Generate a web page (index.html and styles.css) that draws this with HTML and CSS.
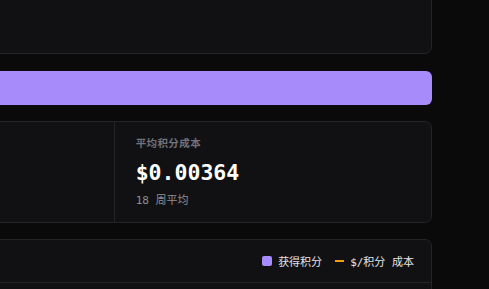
FILE: index.html
```html
<!DOCTYPE html>
<html>
  <head>
    <title>积分统计</title>
    <meta charset="utf-8">
    <link rel="stylesheet" href="styles.css">
  </head>
  <body>
    <main>
      <section class="card card-top"></section>

      <div class="bar"></div>

      <section class="card stats">
        <div class="stat"></div>
        <div class="stat"></div>
        <div class="stat">
          <div class="stat-label">平均积分成本</div>
          <div class="stat-value">$0.00364</div>
          <div class="stat-sub">18 周平均</div>
        </div>
      </section>

      <section class="card chart">
        <div class="chart-head">
          <span class="legend"><span class="swatch"></span>获得积分</span>
          <span class="legend"><span class="dash"></span>$/积分 成本</span>
        </div>
        <div class="chart-body"></div>
      </section>
    </main>
  </body>
</html>
```

FILE: styles.css
```css
:root {
  --color-background: #0a0a0a;
  --color-card: #111113;
  --color-border: #242427;
  --color-text: #f4f4f5;
  --color-muted: #71717a;
  --color-sub: #8e8e96;
  --color-purple: #a78bfa;
  --color-orange: #f59e0b;
}
html, body {
  margin: 0;
  height: 100%;
  overflow: hidden;
  background-color: var(--color-background);
  color: var(--color-text);
  font-family: "DejaVu Sans Mono", "Noto Sans CJK SC", monospace;
}
main {
  width: 954px;
  margin: 0 0 0 -522px;
  display: flex;
  flex-direction: column;
}
.card {
  background-color: var(--color-card);
  border: 1px solid var(--color-border);
  border-radius: 7px;
  box-sizing: border-box;
}
.card-top {
  height: 120px;
  margin-top: -66px;
}
.bar {
  height: 34px;
  margin-top: 17px;
  border-radius: 6px;
  background-color: var(--color-purple);
}
.stats {
  margin-top: 16px;
  height: 102px;
  display: grid;
  grid-template-columns: repeat(3, 1fr);
}
.stat {
  border-left: 1px solid var(--color-border);
  padding: 14px 0 0 21px;
}
.stat:first-child {
  border-left: none;
}
.stat-label {
  font-size: 10.5px;
  line-height: 14px;
  font-weight: bold;
  letter-spacing: 0.4px;
  color: var(--color-muted);
}
.stat-value {
  margin-top: 10px;
  font-size: 21.5px;
  line-height: 26px;
  font-weight: bold;
  color: #ffffff;
}
.stat-sub {
  margin-top: 8px;
  font-size: 11px;
  line-height: 14px;
  color: var(--color-sub);
}
.chart {
  margin-top: 16px;
  height: 120px;
}
.chart-head {
  height: 42px;
  border-bottom: 1px solid var(--color-border);
  display: flex;
  justify-content: flex-end;
  align-items: center;
  gap: 13px;
  padding-right: 17px;
  font-size: 11px;
  color: #e4e4e7;
}
.legend {
  display: flex;
  align-items: center;
  gap: 6px;
}
.swatch {
  width: 10px;
  height: 10px;
  border-radius: 2px;
  background-color: var(--color-purple);
}
.dash {
  width: 9px;
  height: 2px;
  background-color: var(--color-orange);
}
```
